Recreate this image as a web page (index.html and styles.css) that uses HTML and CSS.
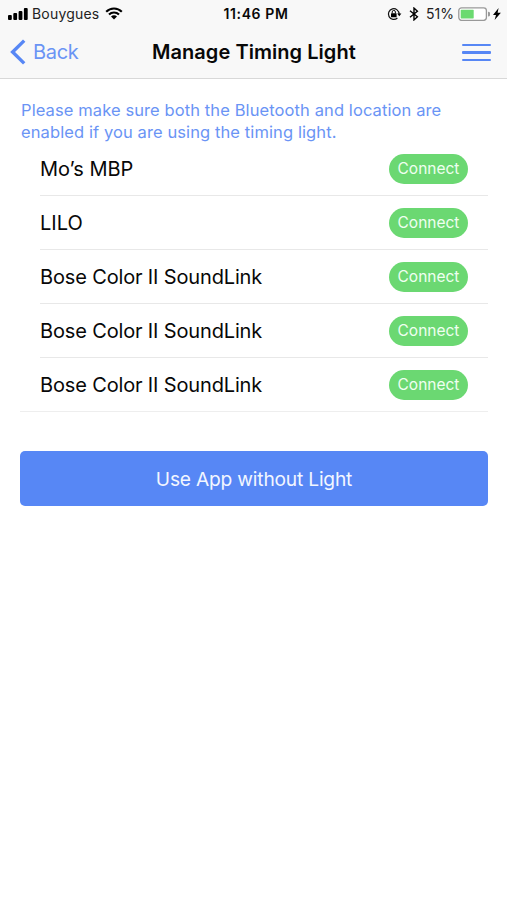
FILE: index.html
```html
<!DOCTYPE html>
<html lang="en">
<head>
<meta charset="utf-8">
<meta name="viewport" content="width=device-width, initial-scale=1">
<title>Manage Timing Light</title>
<link rel="stylesheet" href="styles.css">
</head>
<body>
<header class="top">
  <div class="status">
    <div class="status-left">
      <svg class="signal" width="20" height="12" viewBox="0 0 20 12"><rect x="0" y="7" width="3.8" height="5" rx="1"/><rect x="5.3" y="5" width="3.8" height="7" rx="1"/><rect x="10.6" y="3" width="3.8" height="9" rx="1"/><rect x="15.9" y="0" width="3.8" height="12" rx="1"/></svg>
      <span class="carrier">Bouygues</span>
      <svg class="wifi" width="18" height="13" viewBox="0 0 18 13"><path d="M1.2 4.7a11 11 0 0 1 15.6 0M4 7.6a7 7 0 0 1 10 0" fill="none" stroke="#000" stroke-width="2.1"/><path d="M6 9.6a4.2 4.2 0 0 1 6 0l-3 3z"/></svg>
    </div>
    <span class="clock">11:46 PM</span>
    <div class="status-right">
      <svg class="lock" width="15" height="14" viewBox="0 0 15 14"><path d="M12.1 7.1A5.35 5.35 0 1 0 10.4 11" fill="none" stroke="#111" stroke-width="1.2"/><path d="M10.2 6.4h4.2l-2.1 2.8z"/><rect x="4" y="6.2" width="5.6" height="4" rx=".5"/><path d="M5.2 6.5V5a1.6 1.6 0 0 1 3.2 0v1.5" fill="none" stroke="#111" stroke-width="1"/></svg>
      <svg class="bluetooth" width="10" height="14" viewBox="0 0 10 14"><path d="M1 3.8l7.4 6L5 12.9V1.1l3.4 3.1L1 10.2" fill="none" stroke="#000" stroke-width="1.4"/></svg>
      <span class="percent">51%</span>
      <svg class="battery" width="32" height="14" viewBox="0 0 32 14"><rect x=".8" y=".8" width="27.6" height="12.6" rx="2.8" fill="#fff" stroke="#999" stroke-width="1.3"/><rect x="2.7" y="2.8" width="13" height="8.6" rx=".6" fill="#6bda70"/><path d="M30 4.8a2.2 2.2 0 0 1 0 4.6z" fill="#999"/></svg>
      <svg class="bolt" width="8" height="12" viewBox="0 0 8 12"><path d="M5.6 0L0 6.9h3L1.6 12 7.9 4.7H4.6z"/></svg>
    </div>
  </div>
  <nav class="nav">
    <a class="back"><svg width="16" height="26" viewBox="0 0 16 26"><path d="M14.2 1.6L2.6 13l11.6 11.4" fill="none" stroke="#5787f5" stroke-width="3.4"/></svg><span>Back</span></a>
    <h1 class="title">Manage Timing Light</h1>
    <div class="menu"><i></i><i></i><i></i></div>
  </nav>
</header>
<main>
  <p class="info">Please make sure both the Bluetooth and location are<br>enabled if you are using the timing light.</p>
  <ul class="devices">
    <li><span>Mo’s MBP</span><button>Connect</button></li>
    <li><span>LILO</span><button>Connect</button></li>
    <li><span class="long">Bose Color II SoundLink</span><button>Connect</button></li>
    <li><span class="long">Bose Color II SoundLink</span><button>Connect</button></li>
    <li><span class="long">Bose Color II SoundLink</span><button>Connect</button></li>
  </ul>
  <button class="skip">Use App without Light</button>
</main>
</body>
</html>
```
FILE: styles.css
```css
* { box-sizing: border-box; margin: 0; padding: 0; }
body { background: #fff; color: #080808; font-family: Inter, "Liberation Sans", sans-serif; }
button { border: 0; font-family: inherit; }
svg { display: block; flex: none; }
.top { height: 79px; background: #f8f8f8; border-bottom: 1px solid #d8d8d8; }
.status { height: 27px; display: grid; grid-template-columns: 1fr auto 1fr; align-items: center; padding: 0 6px 0 8px; font-size: 14px; line-height: 27px; white-space: nowrap; }
.status-left, .status-right { display: flex; align-items: center; }
.status-right { justify-content: flex-end; }
.carrier { margin-left: 4px; letter-spacing: .2px; color: #222; }
.wifi { margin-left: 6px; }
.clock { font-weight: 600; letter-spacing: .6px; padding-left: 3px; }
.lock { margin-right: 6.5px; }
.bluetooth { margin-right: 7.5px; }
.percent { margin-right: 4px; color: #222; }
.battery { margin-right: 3px; }
.nav { height: 50px; display: grid; grid-template-columns: 142px auto 1fr; align-items: center; padding: 0 16px 0 10px; }
.back { display: flex; align-items: center; gap: 7px; color: #6a94f5; font-size: 20px; letter-spacing: -.3px; }
.title { font-size: 20px; font-weight: 600; color: #080808; white-space: nowrap; letter-spacing: .05px; }
.menu { justify-self: end; width: 29px; display: grid; gap: 5px; padding-top: 1px; }
.menu i { height: 2.5px; border-radius: 1px; background: #5787f5; }
main { padding: 20px 19px 0 20px; }
.info { padding-left: 1px; color: #6a94f5; font-size: 16.5px; line-height: 22px; letter-spacing: .1px; white-space: nowrap; }
.devices { margin-top: -1px; list-style: none; border-bottom: 1px solid #eee; }
.devices li { height: 54px; margin-left: 20px; padding-right: 20px; display: flex; align-items: center; justify-content: space-between; border-bottom: 1px solid #e8e8e8; font-size: 20px; }
.devices li:last-child { height: 53px; border-bottom: 0; }
.devices .long { letter-spacing: -.15px; }
.devices button { width: 79px; height: 30px; border-radius: 15px; background: #6bd872; color: #effff0; font-size: 15.5px; }
.skip { display: block; width: 468px; height: 55px; margin-top: 39px; border-radius: 5px; background: #5787f5; color: #f2f6ff; font-size: 19.2px; letter-spacing: -.2px; }
```
